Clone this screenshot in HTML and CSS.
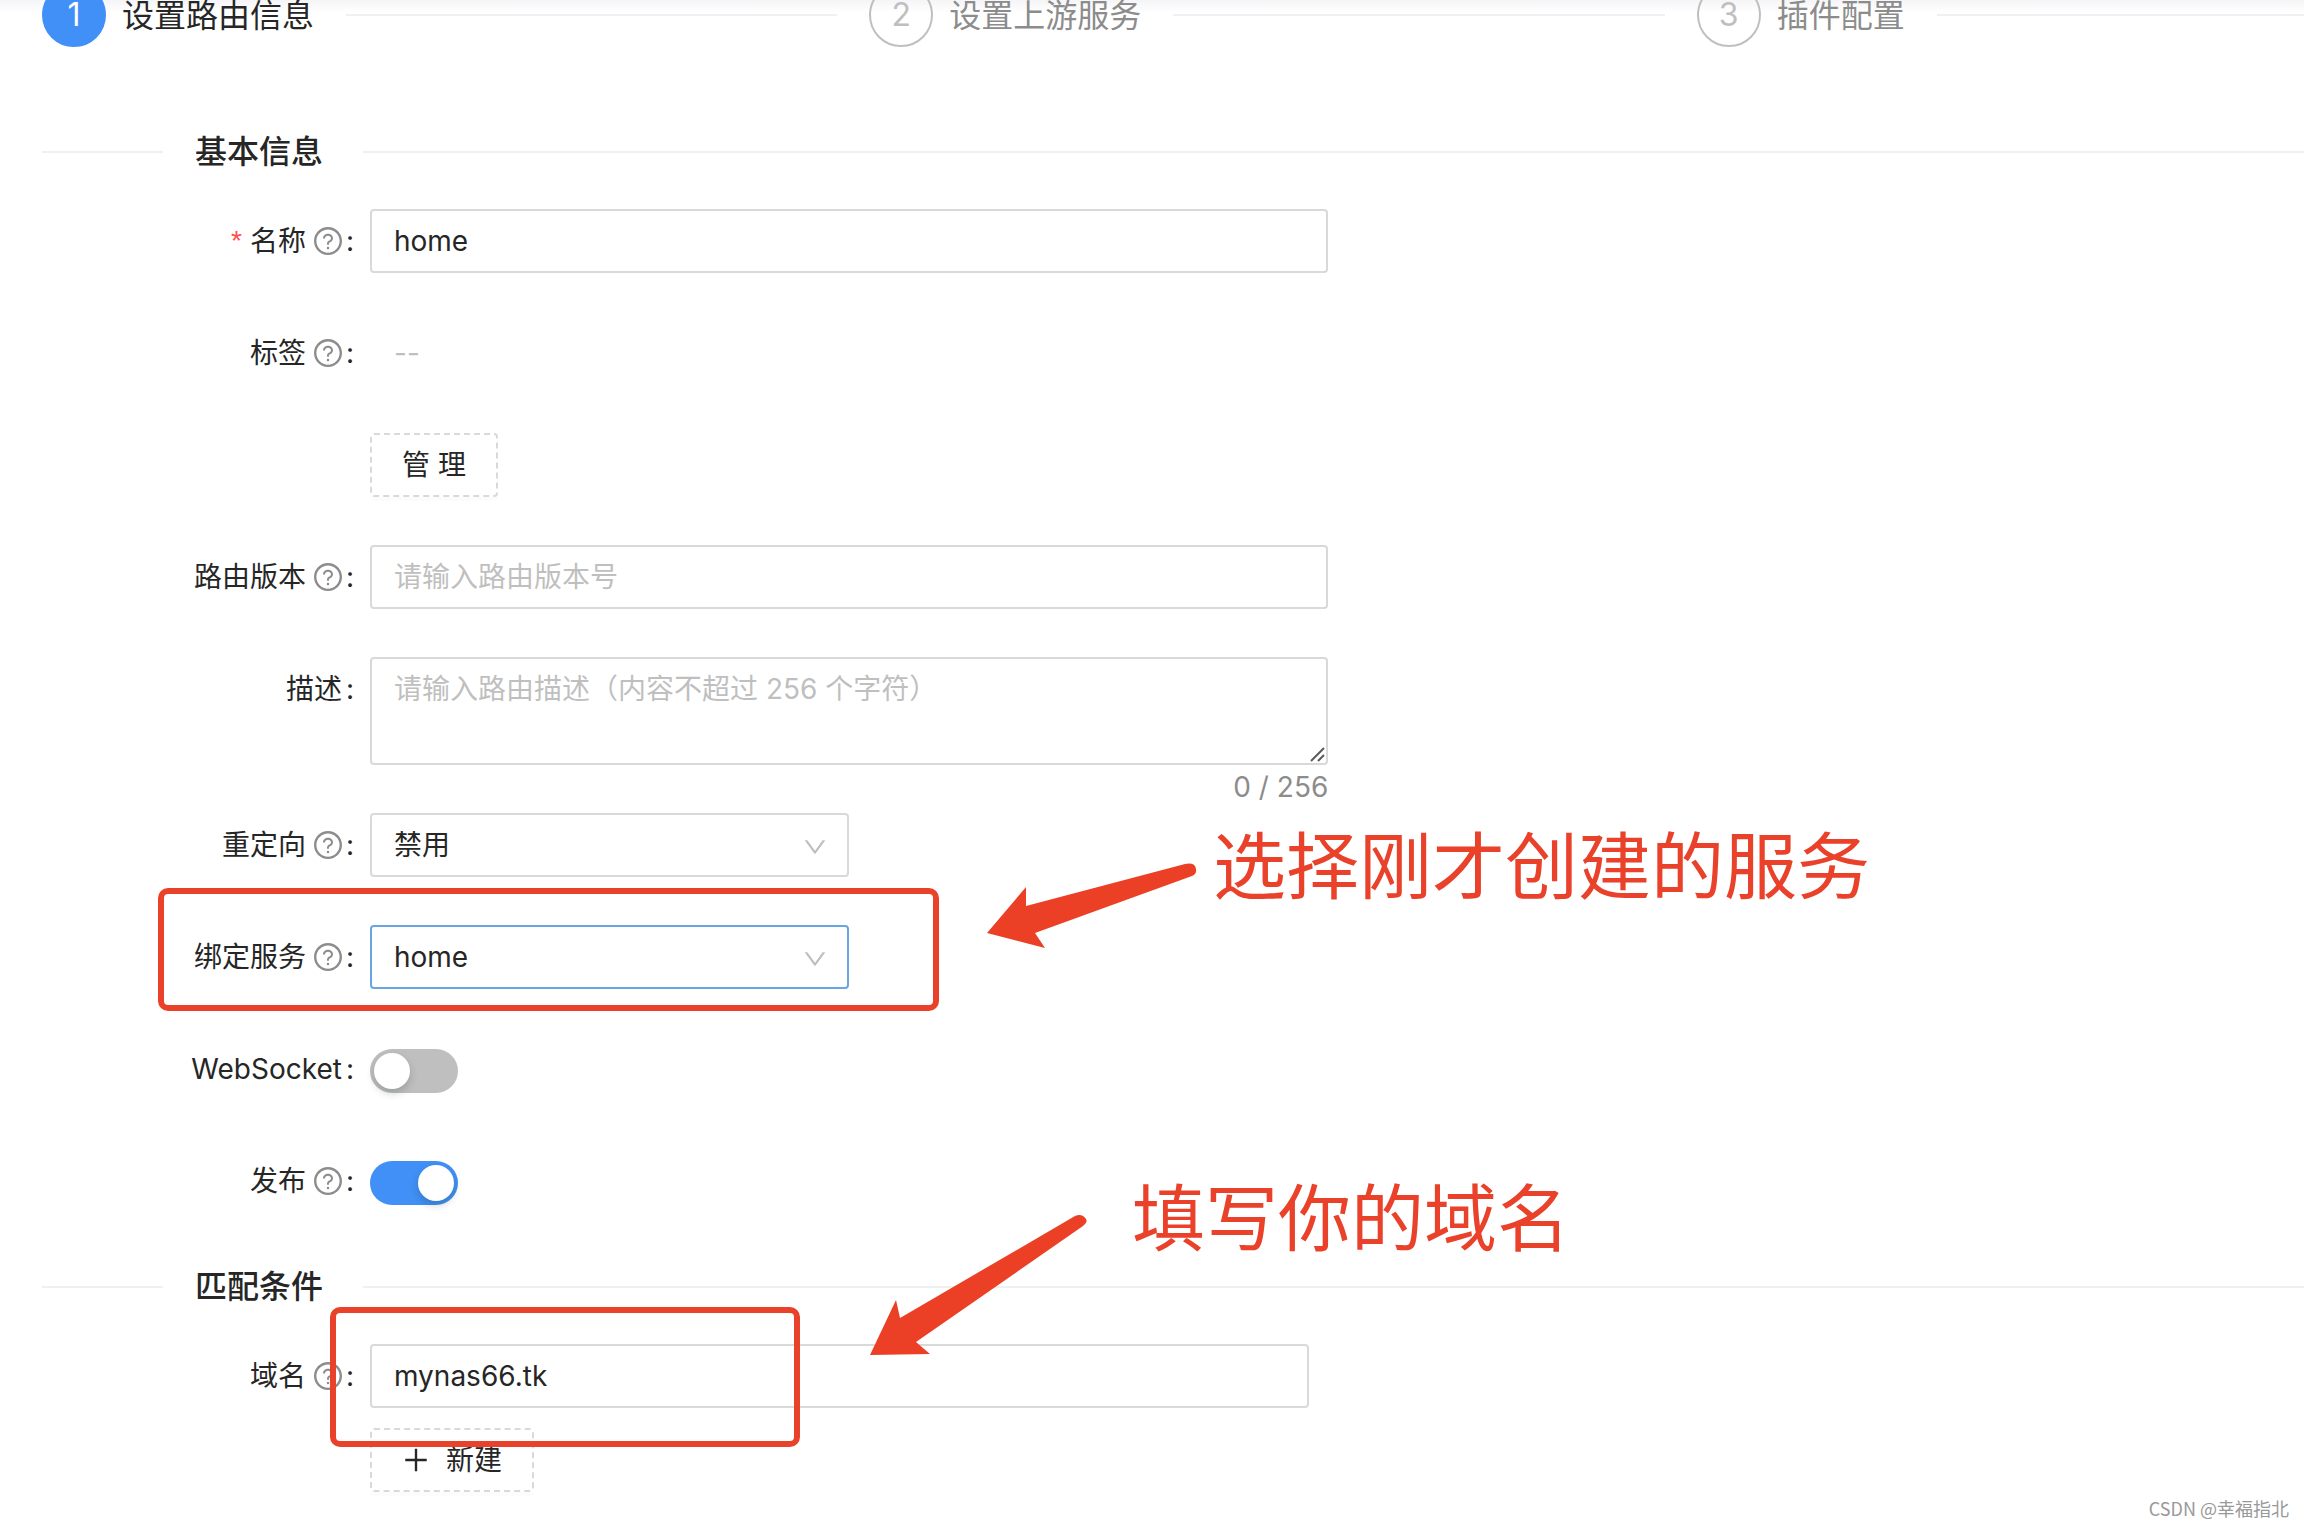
FILE: index.html
```html
<!DOCTYPE html>
<html lang="zh-CN">

<head>
    <meta charset="UTF-8">
    <meta name="viewport" content="width=device-width, initial-scale=1.0">
    <title>创建路由</title>
    <link rel="stylesheet" href="styles.css">
</head>

<body>
    <!-- 公用图标 -->
    <svg class="icon-defs" aria-hidden="true">
        <symbol id="icon-question" viewBox="64 64 896 896">
            <path d="M512 64C264.6 64 64 264.6 64 512s200.6 448 448 448 448-200.6 448-448S759.4 64 512 64zm0 820c-205.4 0-372-166.6-372-372s166.6-372 372-372 372 166.6 372 372-166.6 372-372 372z"/>
            <path d="M623.6 316.7C593.6 290.4 554 276 512 276s-81.6 14.5-111.6 40.7C369.2 344 352 380.7 352 420v7.6c0 4.4 3.6 8 8 8h48c4.4 0 8-3.6 8-8V420c0-44.1 43.1-80 96-80s96 35.9 96 80c0 31.1-22 59.6-56.1 72.7-21.2 8.1-39.2 22.3-52.1 40.9-13.1 19-19.9 41.8-19.9 64.9V620c0 4.4 3.6 8 8 8h48c4.4 0 8-3.6 8-8v-22.7a48.3 48.3 0 0130.9-44.8c59-22.7 97.1-74.7 97.1-132.5.1-39.3-17.1-76-48.3-103.3zM472 732a40 40 0 1080 0 40 40 0 10-80 0z"/>
        </symbol>
        <symbol id="icon-down" viewBox="64 64 896 896">
            <path d="M884 256h-75c-5.1 0-9.9 2.5-12.9 6.6L512 654.2 227.9 262.6c-3-4.1-7.8-6.6-12.9-6.6h-75c-6.5 0-10.3 7.4-6.5 12.7l352.6 486.1c12.8 17.6 39 17.6 51.7 0l352.6-486.1c3.9-5.3.1-12.7-6.4-12.7z"/>
        </symbol>
        <symbol id="icon-plus" viewBox="64 64 896 896">
            <path d="M482 152h60q8 0 8 8v704q0 8-8 8h-60q-8 0-8-8V160q0-8 8-8z"/>
            <path d="M176 474h672q8 0 8 8v60q0 8-8 8H176q-8 0-8-8v-60q0-8 8-8z"/>
        </symbol>
    </svg>

    <!-- 步骤条 -->
    <ol class="steps">
        <li class="step active">
            <span class="step-icon">1</span>
            <span class="step-title">设置路由信息</span>
        </li>
        <li class="step">
            <span class="step-icon">2</span>
            <span class="step-title">设置上游服务</span>
        </li>
        <li class="step">
            <span class="step-icon">3</span>
            <span class="step-title">插件配置</span>
        </li>
    </ol>

    <form class="route-form">
        <h2 class="divider">基本信息</h2>

        <div class="form-item">
            <label class="form-label required" for="name">名称<svg class="help"><use href="#icon-question"/></svg></label>
            <div class="form-control">
                <input class="input" type="text" id="name" value="home">
            </div>
        </div>

        <div class="form-item">
            <div class="form-label">标签<svg class="help"><use href="#icon-question"/></svg></div>
            <div class="form-control">
                <span class="empty-tags">--</span>
            </div>
        </div>

        <div class="form-item">
            <div class="form-control">
                <button class="dashed-button" type="button">管 理</button>
            </div>
        </div>

        <div class="form-item">
            <label class="form-label" for="version">路由版本<svg class="help"><use href="#icon-question"/></svg></label>
            <div class="form-control">
                <input class="input" type="text" id="version" placeholder="请输入路由版本号">
            </div>
        </div>

        <div class="form-item counted">
            <label class="form-label" for="desc">描述</label>
            <div class="form-control">
                <div class="textarea-box">
                    <textarea class="input textarea" id="desc" placeholder="请输入路由描述（内容不超过 256 个字符）"></textarea>
                    <svg class="resize-grip" viewBox="0 0 15 15"><path d="M1 14 14 1M8 14 14 8"/></svg>
                </div>
                <div class="counter">0 / 256</div>
            </div>
        </div>

        <div class="form-item">
            <label class="form-label" for="redirect">重定向<svg class="help"><use href="#icon-question"/></svg></label>
            <div class="form-control">
                <div class="select-box">
                    <select class="input" id="redirect">
                        <option>禁用</option>
                    </select>
                    <svg class="arrow-down"><use href="#icon-down"/></svg>
                </div>
            </div>
        </div>

        <div class="form-item">
            <label class="form-label" for="service">绑定服务<svg class="help"><use href="#icon-question"/></svg></label>
            <div class="form-control">
                <div class="select-box">
                    <select class="input current" id="service">
                        <option>home</option>
                    </select>
                    <svg class="arrow-down"><use href="#icon-down"/></svg>
                </div>
            </div>
        </div>

        <div class="form-item">
            <label class="form-label" for="websocket">WebSocket</label>
            <div class="form-control">
                <input class="switch" type="checkbox" id="websocket">
            </div>
        </div>

        <div class="form-item">
            <label class="form-label" for="publish">发布<svg class="help"><use href="#icon-question"/></svg></label>
            <div class="form-control">
                <input class="switch" type="checkbox" id="publish" checked>
            </div>
        </div>

        <h2 class="divider">匹配条件</h2>

        <div class="form-item hosts">
            <label class="form-label" for="host">域名<svg class="help"><use href="#icon-question"/></svg></label>
            <div class="form-control">
                <input class="input host-input" type="text" id="host" value="mynas66.tk">
            </div>
        </div>

        <div class="form-item">
            <div class="form-control">
                <button class="dashed-button" type="button"><svg class="plus"><use href="#icon-plus"/></svg>新建</button>
            </div>
        </div>
    </form>

    <!-- 标注 -->
    <div class="mark mark-service"></div>
    <div class="mark mark-host"></div>
    <svg class="pointer pointer-service" viewBox="0 0 212 86">
        <path d="M1 70 40 24V43L199 1Q209 -1 210 6Q211 11 206 13L49 70 59 85Z"/>
    </svg>
    <svg class="pointer pointer-host" viewBox="0 0 220 142">
        <path d="M1 141 27 86 31 104 206 2Q213 -1 217 5Q219 8 214 12L47 128 61 140Z"/>
    </svg>
    <p class="note note-service">选择刚才创建的服务</p>
    <p class="note note-host">填写你的域名</p>
    <p class="watermark">CSDN @幸福指北</p>
</body>

</html>
```
FILE: styles.css
```css
* {
    box-sizing: border-box;
}

body {
    position: relative;
    min-height: 100vh;
    margin: 0;
    overflow: hidden;
    background: #fff linear-gradient(#f5f5f8, #fff) no-repeat 0 0 / 100% 12px;
    color: #262626;
    font-family: Inter, "Noto Sans CJK SC", sans-serif;
    font-size: 28px;
    line-height: 44px;
}

svg {
    fill: currentColor;
}

.icon-defs {
    display: none;
}

/* 步骤条 */
.steps {
    display: flex;
    margin: -17px -220px 79px 42px;
    padding: 0;
    list-style: none;
    font-size: 32px;
}

.step {
    flex: 1;
    display: flex;
    align-items: center;
    padding-right: 32px;
    color: #8c8c8c;
}

.step::after {
    content: "";
    flex: 1;
    height: 2px;
    margin-left: 32px;
    background: #f0f0f0;
}

.step-icon {
    display: flex;
    align-items: center;
    justify-content: center;
    width: 64px;
    height: 64px;
    margin-right: 16px;
    border: 2px solid #bfbfbf;
    border-radius: 50%;
    color: #bfbfbf;
}

.step-title {
    padding-top: 2px;
}

.step.active {
    color: #262626;
}

.step.active .step-icon {
    border-color: #4090f7;
    background: #4090f7;
    color: #fff;
}

/* 分割标题 */
.divider {
    display: flex;
    align-items: center;
    gap: 32px;
    margin: 0 0 31px 42px;
    font-size: 32px;
    font-weight: 500;
    line-height: 52px;
}

.divider::before,
.divider::after {
    content: "";
    height: 2px;
    background: #f0f0f0;
}

.divider::before {
    width: 121px;
}

.divider::after {
    flex: 1;
    margin-left: 8px;
}

/* 表单 */
.form-item {
    display: grid;
    grid-template-columns: 370px 1fr;
    margin-bottom: 48px;
}

.form-item.counted {
    margin-bottom: 4px;
}

.form-item.hosts {
    margin-bottom: 20px;
}

.form-item:last-child {
    margin-bottom: 0;
}

.form-label {
    display: flex;
    align-items: center;
    justify-content: flex-end;
    height: 64px;
    padding-right: 16px;
}

.form-label::after {
    content: ":";
    margin-left: 4px;
}

.form-label.required::before {
    content: "*";
    margin-right: 8px;
    color: #ff4d4f;
    font-family: "Liberation Sans", sans-serif;
}

.help {
    width: 28px;
    height: 28px;
    margin-left: 8px;
    color: #8c8c8c;
}

.form-control {
    grid-column: 2;
    display: flex;
    flex-direction: column;
    align-items: flex-start;
    justify-content: center;
    width: 49.55%;
    min-height: 64px;
}

.input {
    display: block;
    width: 100%;
    height: 64px;
    padding: 8px 22px;
    border: 2px solid #d9d9d9;
    border-radius: 4px;
    outline: none;
    background: #fff;
    color: inherit;
    font: inherit;
}

.input::placeholder {
    color: #bfbfbf;
}

.textarea-box {
    position: relative;
    width: 100%;
}

.textarea {
    height: 108px;
    resize: vertical;
}

.textarea::-webkit-resizer {
    background: transparent;
}

.resize-grip {
    position: absolute;
    right: 3px;
    bottom: 3px;
    width: 15px;
    height: 15px;
    fill: none;
    stroke: #595959;
    stroke-width: 2;
    pointer-events: none;
}

.host-input {
    width: 98%;
}

.counter {
    align-self: flex-end;
    color: #8c8c8c;
}

.empty-tags {
    padding: 0 24px;
    color: #bfbfbf;
}

.select-box {
    position: relative;
    width: 50%;
}

.select-box .input {
    appearance: none;
}

.select-box .current {
    border-color: #69a5e3;
}

.arrow-down {
    position: absolute;
    top: 22px;
    right: 22px;
    width: 24px;
    height: 24px;
    color: #bfbfbf;
    pointer-events: none;
}

.dashed-button {
    display: flex;
    align-items: center;
    height: 64px;
    padding: 0 30px;
    border: 2px dashed #d9d9d9;
    border-radius: 4px;
    background: #fff;
    box-shadow: 0 4px 0 rgba(0, 0, 0, 0.01);
    color: inherit;
    font: inherit;
    cursor: pointer;
}

.plus {
    width: 28px;
    height: 28px;
    margin-right: 16px;
}

/* 开关 */
.switch {
    appearance: none;
    display: flex;
    width: 88px;
    height: 44px;
    margin: 4px 0 0;
    padding: 4px;
    border-radius: 22px;
    background: #bfbfbf;
    cursor: pointer;
}

.switch::before {
    content: "";
    width: 36px;
    height: 36px;
    border-radius: 50%;
    background: #fff;
    box-shadow: 0 4px 8px rgba(0, 35, 11, 0.2);
}

.switch:checked {
    justify-content: flex-end;
    background: #4090f7;
}

/* 标注 */
.mark {
    position: absolute;
    border: 6px solid #e9412a;
    border-radius: 10px;
    pointer-events: none;
}

.mark-service {
    top: 888px;
    left: 158px;
    width: 781px;
    height: 123px;
}

.mark-host {
    top: 1307px;
    left: 330px;
    width: 470px;
    height: 140px;
}

.pointer {
    position: absolute;
    fill: #ec4026;
    pointer-events: none;
}

.pointer-service {
    top: 863px;
    left: 986px;
    width: 212px;
    height: 86px;
}

.pointer-host {
    top: 1214px;
    left: 869px;
    width: 220px;
    height: 142px;
}

.note {
    position: absolute;
    margin: 0;
    color: #e9412a;
    font-size: 73px;
    line-height: 100px;
    white-space: nowrap;
}

.note-service {
    top: 817px;
    left: 1213px;
}

.note-host {
    top: 1169px;
    left: 1132px;
}

.watermark {
    position: absolute;
    right: 15px;
    bottom: 4px;
    margin: 0;
    color: #999;
    font-family: "Noto Sans CJK SC", sans-serif;
    font-size: 18px;
    line-height: 28px;
}
```
